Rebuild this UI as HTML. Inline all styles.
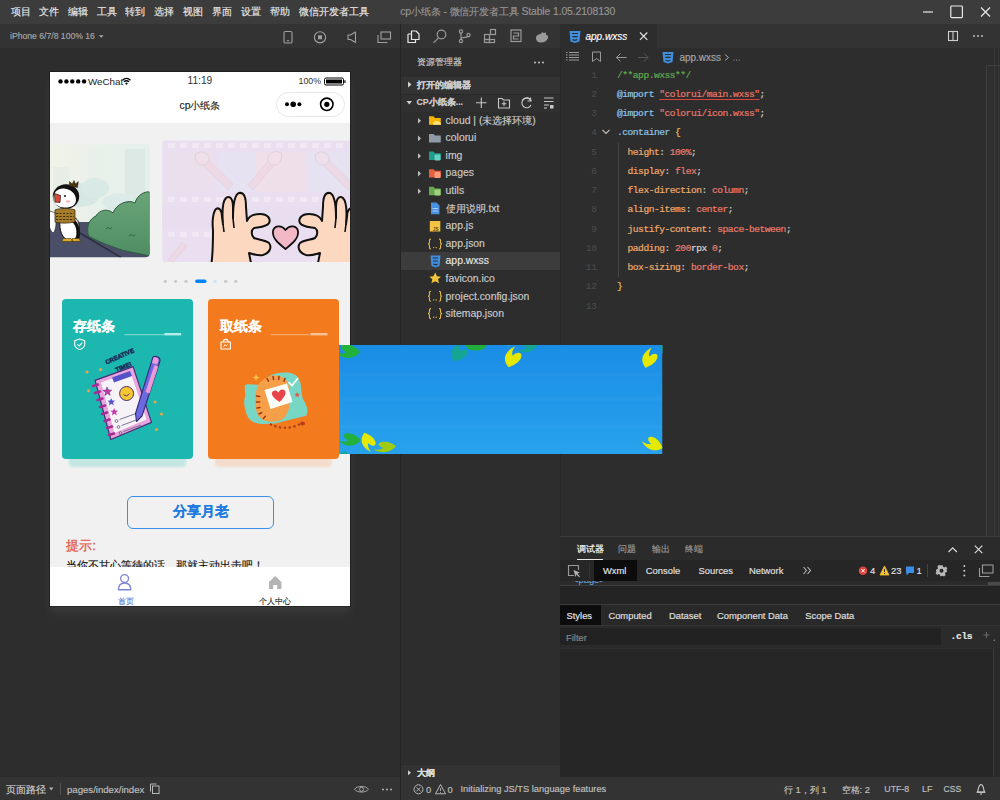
<!DOCTYPE html>
<html><head><meta charset="utf-8">
<style>
*{box-sizing:border-box;margin:0;padding:0}
html,body{width:1000px;height:800px;overflow:hidden;background:#2d2d2d;font-family:"Liberation Sans",sans-serif;color:#ccc}
.a{position:absolute}
svg{position:absolute;overflow:visible}
.t{position:absolute;white-space:nowrap;line-height:1;-webkit-text-stroke:.15px currentColor}
</style></head><body>

<!-- title bar -->
<div class="a" style="left:0;top:0;width:1000px;height:24px;background:#3c3c3c"></div>
<div class="t" style="left:10.5px;top:6.5px;font-size:10.4px;color:#e8e8e8">项目</div><div class="t" style="left:39px;top:6.5px;font-size:10.4px;color:#e8e8e8">文件</div><div class="t" style="left:67.7px;top:6.5px;font-size:10.4px;color:#e8e8e8">编辑</div><div class="t" style="left:96.9px;top:6.5px;font-size:10.4px;color:#e8e8e8">工具</div><div class="t" style="left:125.4px;top:6.5px;font-size:10.4px;color:#e8e8e8">转到</div><div class="t" style="left:154px;top:6.5px;font-size:10.4px;color:#e8e8e8">选择</div><div class="t" style="left:183px;top:6.5px;font-size:10.4px;color:#e8e8e8">视图</div><div class="t" style="left:212px;top:6.5px;font-size:10.4px;color:#e8e8e8">界面</div><div class="t" style="left:241px;top:6.5px;font-size:10.4px;color:#e8e8e8">设置</div><div class="t" style="left:270px;top:6.5px;font-size:10.4px;color:#e8e8e8">帮助</div><div class="t" style="left:299px;top:6.5px;font-size:10.4px;color:#e8e8e8">微信开发者工具</div>
<div class="t" style="left:400.3px;top:6.8px;font-size:10.4px;color:#959595;letter-spacing:-.12px">cp小纸条 - 微信开发者工具 Stable 1.05.2108130</div>

<!-- sim toolbar -->
<div class="a" style="left:0;top:24px;width:400px;height:24px;background:#333333"></div>
<div class="t" style="left:10px;top:32px;font-size:8.65px;color:#a8a8a8">iPhone 6/7/8 100% 16</div>

<svg style="left:0;top:0" width="1000" height="800">
  <!-- sim toolbar icons -->
  <g fill="none" stroke="#a0a0a0" stroke-width="1.1">
    <rect x="284" y="31.5" width="8" height="11.5" rx="1.3"/>
    <path d="M286.8 40.8 L289.2 40.8"/>
    <circle cx="320" cy="37.3" r="5.6"/>
    <path d="M348 35 L350.5 35 L355.5 32 L355.5 42.5 L350.5 39.5 L348 39.5 Z" stroke-linejoin="round"/>
    <rect x="381" y="32" width="9.5" height="7" />
    <path d="M378 35 L378 42.5 L387.5 42.5"/>
  </g>
  <rect x="318" y="35.3" width="4" height="4" fill="#a0a0a0"/>
  <path d="M99 35.3 L103.5 35.3 L101.25 37.8 Z" fill="#b0b0b0"/>
  <!-- window controls -->
  <path d="M923 12 L933 12" stroke="#e8e8e8" stroke-width="1.2"/>
  <rect x="950.8" y="6" width="11.6" height="11.6" rx=".8" fill="none" stroke="#e8e8e8" stroke-width="1.2"/>
  <path d="M981 7.5 L990 16.5 M990 7.5 L981 16.5" stroke="#e8e8e8" stroke-width="1.2"/>
</svg>
<!-- simulator area -->
<div class="a" style="left:0;top:48px;width:400px;height:729px;background:#2d2d2d"></div>
<div class="a" style="left:400px;top:24px;width:1px;height:753px;background:#242424"></div>

<!-- phone -->
<div class="a" style="left:50px;top:72px;width:300px;height:534px;box-shadow:0 0 0 1px rgba(0,0,0,.35),0 7px 9px rgba(255,255,255,.07)"></div>
<div id="phone" class="a" style="left:50px;top:72px;width:300px;height:533.6px;background:#f1f1f1;overflow:hidden">
  <!-- status + nav -->
  <div class="a" style="left:0;top:0;width:300px;height:51px;background:#fff"></div>
  <svg style="left:0;top:0" width="300" height="20">
    <circle cx="10.5" cy="9.4" r="2.2" fill="#000"/><circle cx="16.4" cy="9.4" r="2.2" fill="#000"/><circle cx="22.3" cy="9.4" r="2.2" fill="#000"/><circle cx="28.2" cy="9.4" r="2.2" fill="#000"/><circle cx="34.1" cy="9.4" r="2.2" fill="#000"/>
    <path d="M72.5 8.2 Q76.5 4.6 80.5 8.2" stroke="#000" stroke-width="1.3" fill="none"/>
    <path d="M74 9.8 Q76.5 7.6 79 9.8" stroke="#000" stroke-width="1.3" fill="none"/>
    <circle cx="76.5" cy="11.6" r="1.1" fill="#000"/>
    <rect x="274.5" y="6" width="19" height="7" rx="1.5" fill="none" stroke="#000" stroke-width="1"/>
    <rect x="276" y="7.5" width="16" height="4" fill="#000"/>
    <rect x="294.3" y="8.3" width="1.2" height="2.6" fill="#000"/>
  </svg>
  <div class="t" style="left:38px;top:4.5px;font-size:9.8px;color:#222;-webkit-text-stroke:0">WeChat</div>
  <div class="t" style="left:137.5px;top:3.5px;font-size:10.2px;color:#333;-webkit-text-stroke:0">11:19</div>
  <div class="t" style="left:248.5px;top:5px;font-size:8.8px;color:#333;-webkit-text-stroke:0">100%</div>
  <div class="t" style="left:129.5px;top:28.5px;font-size:10.4px;color:#222">cp小纸条</div>
  <!-- capsule -->
  <div class="a" style="left:225.5px;top:19.8px;width:69.6px;height:25px;border:1px solid #e6e6e6;border-radius:13px;background:rgba(255,255,255,.6)"></div>
  <svg style="left:0;top:0" width="300" height="60">
    <circle cx="237" cy="32.3" r="2" fill="#000"/><circle cx="243.2" cy="32.3" r="2.8" fill="#000"/><circle cx="249.4" cy="32.3" r="2" fill="#000"/>
    <circle cx="276.8" cy="32.3" r="6.2" fill="none" stroke="#000" stroke-width="1.6"/>
    <circle cx="276.8" cy="32.3" r="2.6" fill="#000"/>
  </svg>

  <!-- swiper -->
  <svg style="left:0;top:0" width="300" height="534">
    <defs>
      <clipPath id="cl1"><rect x="-10" y="71.4" width="109.5" height="113.9" rx="4"/></clipPath>
      <clipPath id="cl2"><rect x="112.2" y="68.3" width="250" height="121.7" rx="4"/></clipPath>
      <linearGradient id="g1" x1="0" y1="0" x2="1" y2="0"><stop offset="0" stop-color="#f1f3e8"/><stop offset="1" stop-color="#e4efec"/></linearGradient>
      <linearGradient id="gbush" x1="0" y1="0" x2="0" y2="1"><stop offset="0" stop-color="#6aa579"/><stop offset="1" stop-color="#4f8d62"/></linearGradient>
    </defs>
    <g clip-path="url(#cl1)">
      <rect x="-10" y="71.4" width="110" height="114" fill="url(#g1)"/>
      <rect x="3" y="95" width="16" height="45" fill="#e6eee6"/>
      <rect x="38" y="76" width="18" height="70" fill="#e8f0ea"/>
      <rect x="75" y="77" width="20" height="60" fill="#dde9e4"/>
      <ellipse cx="30" cy="123" rx="20" ry="12" fill="#d6e7e4"/>
      <ellipse cx="45" cy="116" rx="14" ry="10" fill="#d9e9e6"/>
      <ellipse cx="70" cy="130" rx="18" ry="9" fill="#dcebe8"/>
      <path d="M-10 150 L40 150 L99.5 172 L99.5 186 L-10 186 Z" fill="#4a4f67"/>
      <path d="M29 160.5 L71 185.5" stroke="#2c2f42" stroke-width="1.6"/>
      <path d="M38.5 164 C36 155 39 147 46 144 C49 138 58 136 63 141 C66 132 78 127 85 131 C87 123 95 119 99.5 120 L99.5 184 C88 181 76 180 66 176 C55 172 45 168 38.5 164 Z" fill="url(#gbush)" stroke="#2f5b40" stroke-width="1"/>
      <path d="M56 157 l2 -1.5 l2 1.5 l2 -1.5 M79 164 l2 -1.5 l2 1.5 l2 -1.5" stroke="#2f5b40" stroke-width=".8" fill="none"/>
      <!-- penguin -->
      <path d="M0 139 C-3 148 -1 158 3 161 C6 159 7 149 5 141 Z" fill="#fff" stroke="#222" stroke-width=".6"/>
      <path d="M10 149 C9 158 12 167 19 168.5 C27 169 30 161 29 152 C28 147 25 145 20 145 C14 145 11 146 10 149 Z" fill="#fff" stroke="#111" stroke-width="1"/>
      <path d="M23.5 147 C29 150 31 159 29.5 166 L25.5 167.5 C27.5 160 26.5 153 21.5 149.5 Z" fill="#111"/>
      <ellipse cx="16" cy="124.5" rx="13.2" ry="12.3" fill="#111"/>
      <path d="M3.5 127.5 C3 120 8 116 14 116.5 C21 117 26 122 26 128 C26 133.5 20.5 136 14 135.5 C8 135 4 132 3.5 127.5 Z" fill="#fff"/>
      <path d="M4.5 121.5 L10.5 123.5 L10 130.5 L5 130 Z" fill="#e0493a" stroke="#111" stroke-width=".7"/>
      <circle cx="15" cy="124" r="1" fill="#111"/>
      <ellipse cx="18" cy="129.5" rx="2" ry="1.2" fill="#f3b6b0"/>
      <path d="M19.5 114 L19.5 109.5 L22.2 112 L24 108.5 L25.5 112 L28.3 109.5 L27.5 115.5 Z" fill="#4a3510" stroke="#2a1a00" stroke-width=".5"/>
      <path d="M5 138 C9 136 20 136 25 138 L25 150 C18 151.5 10 151.5 5 150 Z" fill="#a57c2c" stroke="#2a1f08" stroke-width=".7"/>
      <path d="M6 141.5 L24 141.5 M6 144.5 L24 144.5 M6 147.5 L24 147.5" stroke="#3a2a08" stroke-width=".9" stroke-dasharray="2.2 1.3"/>
      <path d="M13 166.5 L21 166.5 L23 169.5 L12 169.5 Z M22 166.5 L29 166.5 L30.5 169.3 L22 169.5 Z" fill="#d9a930" stroke="#3a2a00" stroke-width=".5"/>
    </g>
    <g clip-path="url(#cl2)">
      <rect x="112.2" y="68.3" width="200" height="122" fill="#eadff0"/>
      <rect x="118" y="80" width="46" height="40" fill="#ecdfec"/>
      <rect x="168" y="80" width="50" height="40" fill="#e6e2f1"/>
      <rect x="206" y="80" width="50" height="40" fill="#eedfe9"/>
      <rect x="258" y="80" width="46" height="40" fill="#e6e2f1"/>
      <rect x="112" y="134" width="200" height="22" fill="#e9ddf0"/>
      <g fill="#f0e8f4">
        <rect x="118" y="71" width="7" height="5"/><rect x="130" y="71" width="7" height="5"/><rect x="142" y="71" width="7" height="5"/><rect x="154" y="71" width="7" height="5"/><rect x="166" y="71" width="7" height="5"/><rect x="178" y="71" width="7" height="5"/><rect x="190" y="71" width="7" height="5"/><rect x="202" y="71" width="7" height="5"/><rect x="214" y="71" width="7" height="5"/><rect x="226" y="71" width="7" height="5"/><rect x="238" y="71" width="7" height="5"/><rect x="250" y="71" width="7" height="5"/><rect x="262" y="71" width="7" height="5"/><rect x="274" y="71" width="7" height="5"/><rect x="286" y="71" width="7" height="5"/>
        <rect x="118" y="125" width="7" height="5"/><rect x="130" y="125" width="7" height="5"/><rect x="142" y="125" width="7" height="5"/><rect x="154" y="125" width="7" height="5"/><rect x="166" y="125" width="7" height="5"/><rect x="178" y="125" width="7" height="5"/><rect x="190" y="125" width="7" height="5"/><rect x="202" y="125" width="7" height="5"/><rect x="214" y="125" width="7" height="5"/><rect x="226" y="125" width="7" height="5"/><rect x="238" y="125" width="7" height="5"/><rect x="250" y="125" width="7" height="5"/><rect x="262" y="125" width="7" height="5"/><rect x="274" y="125" width="7" height="5"/><rect x="286" y="125" width="7" height="5"/>
        <rect x="118" y="160" width="7" height="5"/><rect x="130" y="160" width="7" height="5"/><rect x="142" y="160" width="7" height="5"/><rect x="154" y="160" width="7" height="5"/>
      </g>
      <g opacity=".5">
        <path d="M178 118 L152 92 L157 86 L183 112 Z" fill="#f0d2dc" stroke="#d8c0cc" stroke-width=".7"/>
        <path d="M146 82 C150 78 157 80 159 85 C160 90 156 94 151 93 C147 92 144 87 146 82 Z" fill="#f3dde4" stroke="#cdbac6" stroke-width=".8"/>
        <path d="M203 118 L225 92 L220 87 L198 113 Z" fill="#f0d2dc" stroke="#d8c0cc" stroke-width=".7"/>
        <path d="M231 81 C227 78 220 80 218 85 C217 90 221 94 226 93 C230 92 233 86 231 81 Z" fill="#f3dde4" stroke="#cdbac6" stroke-width=".8"/>
        <path d="M298 118 L272 92 L277 86 L303 112 Z" fill="#f0d2dc" stroke="#d8c0cc" stroke-width=".7"/>
        <path d="M266 82 C270 78 277 80 279 85 C280 90 276 94 271 93 C267 92 264 87 266 82 Z" fill="#f3dde4" stroke="#cdbac6" stroke-width=".8"/>
        <path d="M118 188 L132 170 L137 174 L123 190 Z" fill="#f0d2dc" stroke="#d8c0cc" stroke-width=".7"/>
      </g>
      <!-- left hand -->
      <path d="M161.5 191 C163 180 163 168 163 158 C162 150 163 140 166 137 C169 135 172 138 172 145 L173 152 C172 140 172 130 176 126 C180 123 183 127 183 135 L183 146 C183 133 184 123 189 121 C194 120 196 125 196 135 L197 149 C199 144 204 142 210 142 C218 142 221 147 219 151 C217 155 210 155 204 156 C201 158 201 163 204 166 C208 168 215 168 219 171 C222 175 220 181 213 183 C207 184 203 182 199 181 L201 191 Z" fill="#fbd8bf" stroke="#111" stroke-width="2" stroke-linejoin="round"/>
      <path d="M173 152 L174 160 M183 146 L184 156" stroke="#111" stroke-width="1.6" fill="none"/>
      <!-- heart -->
      <path d="M235.5 177 C228 171 222 166 223 159 C224 154 231 152 235.5 158 C240 152 247 154 248 159 C249 166 243 171 235.5 177 Z" fill="#f2b8c6" stroke="#111" stroke-width="1.8" stroke-linejoin="round"/>
      <!-- right hand -->
      <path d="M310 191 C306 180 306 168 306 158 C307 150 306 140 303 137 C300 135 297 138 297 145 L296 152 C297 140 297 130 293 126 C289 123 286 127 286 135 L286 146 C286 133 285 123 280 121 C275 120 273 125 273 135 L272 149 C270 144 265 142 259 142 C251 142 248 147 250 151 C252 155 259 155 265 156 C268 158 268 163 265 166 C261 168 254 168 250 171 C247 175 249 181 256 183 C262 184 266 182 270 181 L268 191 Z" fill="#fbd8bf" stroke="#111" stroke-width="2" stroke-linejoin="round"/>
      <path d="M296 152 L295 160 M286 146 L285 156" stroke="#111" stroke-width="1.6" fill="none"/>
    </g>
    <!-- dots -->
    <g fill="#c8c8c8">
      <circle cx="115.3" cy="209.3" r="1.6"/><circle cx="125.6" cy="209.3" r="1.6"/><circle cx="136" cy="209.3" r="1.6"/>
      <circle cx="165" cy="209.3" r="1.6" fill="#cfe0ee"/><circle cx="175.7" cy="209.3" r="1.6"/><circle cx="185.8" cy="209.3" r="1.6"/>
    </g>
    <rect x="145.2" y="207.6" width="11.3" height="3.4" rx="1.7" fill="#0081ff"/>
  </svg>

  <!-- cards -->
  <div class="a" style="left:18.5px;top:236px;width:117px;height:158.8px;background:#c3e6e3;filter:blur(.8px);border-radius:4px"></div>
  <div class="a" style="left:11.6px;top:227.2px;width:131.7px;height:159.5px;background:#1cb8b0;border-radius:4px"></div>
  <div class="a" style="left:165px;top:236px;width:117px;height:158.8px;background:#f3dccb;filter:blur(.8px);border-radius:4px"></div>
  <div class="a" style="left:158.4px;top:227.2px;width:130.3px;height:159.5px;background:#f37b1d;border-radius:4px"></div>
  <div class="t" style="left:23.3px;top:247.5px;font-size:13.8px;font-weight:700;color:#fff">存纸条</div>
  <div class="t" style="left:169.7px;top:247.5px;font-size:13.8px;font-weight:700;color:#fff">取纸条</div>
  <svg style="left:0;top:0" width="300" height="534">
    <rect x="74.4" y="262.2" width="40" height="1" fill="#8ad9d3"/>
    <rect x="114.3" y="261" width="16.8" height="2.4" fill="#b3ece8"/>
    <rect x="220.8" y="262.2" width="38.5" height="1" fill="#f7b27c"/>
    <rect x="260.3" y="261" width="17.2" height="2.4" fill="#f9c39a"/>
    <!-- shield -->
    <path d="M29.7 267 L34.7 268.8 L34.7 272.5 C34.7 275 32.5 276.6 29.7 277.5 C26.9 276.6 24.7 275 24.7 272.5 L24.7 268.8 Z" fill="none" stroke="#fff" stroke-width="1.1" stroke-linejoin="round"/>
    <path d="M27.3 272.3 L29.2 274 L32.3 270.6" fill="none" stroke="#fff" stroke-width="1.1"/>
    <!-- bag -->
    <path d="M171 270 L180.4 270 L180.4 277 L171 277 Z" fill="none" stroke="#fff" stroke-width="1.1" stroke-linejoin="round"/>
    <path d="M173.3 270 C173.3 266.5 178.1 266.5 178.1 270" fill="none" stroke="#fff" stroke-width="1.1"/>
    <path d="M173.5 275 L175 272.5 L176.3 274 L177.8 272.2" fill="none" stroke="#fff" stroke-width=".8"/>
    <!-- notebook illustration -->
    <g fill="#e3a54a"><circle cx="37" cy="300" r="1.6"/><circle cx="50.6" cy="297.6" r="1.6"/><circle cx="38.5" cy="318.8" r="1.6"/><circle cx="105" cy="330" r="1.6"/><circle cx="111.5" cy="342" r="1.6"/><circle cx="106.5" cy="357.5" r="1.6"/></g>
    <text x="0" y="0" font-family="Liberation Sans" font-weight="700" font-size="6.2" fill="#1d2a5a" stroke="#1d2a5a" stroke-width=".45" transform="translate(56.5,292.5) rotate(-24)">CREATIVE</text>
    <text x="0" y="0" font-family="Liberation Sans" font-weight="700" font-size="6.2" fill="#1d2a5a" stroke="#1d2a5a" stroke-width=".45" transform="translate(66.5,300) rotate(-22)">TIME!</text>
    <path d="M45.1 308.4 L83.1 294.6 L101.5 350.4 L60.8 367.5 Z" fill="#e9a6dc" stroke="#4b2a78" stroke-width="1.2" stroke-linejoin="round"/>
    <path d="M51 310.5 L80.5 300 L96.5 347.5 L64.5 361 Z" fill="#f6f3f8"/>
    <path d="M62 305.5 L80 299 L82 304 L64 310.5 Z" fill="#5551c9"/>
    <circle cx="76.6" cy="321.5" r="7" fill="#f5c832" stroke="#4b2a78" stroke-width="1"/>
    <path d="M73.5 322.5 Q76.5 325.5 79.5 321.5" stroke="#4b2a78" stroke-width=".9" fill="none"/>
    <path d="M57 315 l1.5 3 l3.2 .2 l-2.4 2 l.9 3.1 l-2.7 -1.7 l-2.7 1.9 l.7 -3.2 l-2.6 -2 l3.3 -.3 Z" fill="#c43aa8" stroke="#4b2a78" stroke-width=".5"/>
    <path d="M61 326 l1.3 2.6 l2.8 .2 l-2.1 1.8 l.8 2.7 l-2.4 -1.5 l-2.4 1.6 l.6 -2.8 l-2.2 -1.8 l2.9 -.2 Z" fill="#5551c9"/>
    <path d="M64 336 l1.3 2.6 l2.8 .2 l-2.1 1.8 l.8 2.7 l-2.4 -1.5 l-2.4 1.6 l.6 -2.8 l-2.2 -1.8 l2.9 -.2 Z" fill="#c43aa8"/>
    <g fill="none" stroke="#6a6a88" stroke-width=".9"><circle cx="66.5" cy="349" r="1.4"/><circle cx="68.5" cy="355" r="1.4"/><circle cx="70.5" cy="361" r="1.4"/>
    <path d="M69.5 347.5 L86 341.5 M71.5 353.5 L89 347 M73.5 359.5 L91 353"/></g>
    <g stroke="#a52c95" stroke-width="2.6" stroke-linecap="round"><path d="M43 314 l5 -1.5 M45 321 l5 -1.5 M47.5 328 l5 -1.5 M50 335 l5 -1.5 M52 342 l5 -1.5 M54.5 349 l5 -1.5 M57 356 l5 -1.5 M59 363 l5 -1.5"/></g>
    <path d="M103 285 C106 283.5 110.5 285 110 289 L92 344 L86.5 349.5 L85.5 341.5 Z" fill="#6c6ae0" stroke="#3b2a78" stroke-width="1.1" stroke-linejoin="round"/>
    <path d="M104.5 293 L95.5 320 L99.5 321.5 L108.2 294.5 Z" fill="#ee9ad8"/>
    <path d="M103.5 285.5 C106 284.5 109 286 108.5 288.5 L107 292.5 L102 291 Z" fill="#ee9ad8"/>
    
    <!-- tiger illustration -->
    <path d="M194.8 313.2 C194.5 318 195.5 322 195.3 324 C194 328 194 330 194.4 333.3 C195 338 196 341 197.2 343.7 C199 347 201 349 203.8 350.2 C207 351.5 210 352 213.1 352.1 L224.4 351.6 C228 351 231 350 233.8 349.3 L256.3 343.7 C257.5 341 257.5 338.5 257.2 336.2 C256 332 254 329 252.5 325.8 C251.5 321 251 316 250.7 311.8 C249.5 308 248 305 246 303.3 C243 301.5 240 300.7 237.5 300.5 C232 300.5 228 301 224.4 301.9 C221 303 219.5 304 217.8 305.2 C214 308 211 311 208.5 312.7 C205 312.5 202 312.3 199 312.2 C197 312.2 195.5 312.5 194.8 313.2 Z" fill="#78d6c5"/>
    <path d="M206 320 C208 309 216 303.5 226 303.5 C234 303.5 239 309 239.5 318 C241 328 240 340 234 346 C228 351 216 351 210 346 C205 341 204.5 330 206 320 Z" fill="#f5a049"/>
    <g stroke="#9e3512" stroke-width="1.5" stroke-linecap="round" fill="none"><path d="M206.5 324 l3.2 .6 M206.5 330 l3.2 0 M207 336 l3 -.6 M209 342 l2.7 -1.4 M213.5 346.5 l1.8 -2.2 M217 306.5 l1.5 2.6 M223 304.5 l.6 3 M229 304.5 l-.3 3 M235 306.5 l-1 2.7"/></g>
    <path d="M214.5 318 L237 311.5 L242.5 330 L220.5 337 Z" fill="#fffdf8"/>
    <path d="M229.5 330 C225 327 221 323.5 222 320.5 C223 318 226.5 317.5 228.5 320.5 C230 317 233.5 316.5 235.2 319 C236.5 322 233.5 326.5 229.5 330 Z" fill="#e8454a"/>
    <path d="M238.5 310 L242 313.5 L248 306" stroke="#fff" stroke-width="1.6" fill="none"/>
    <path d="M247 320 l.9 1.8 l2 .1 l-1.5 1.3 l.6 2 l-1.8 -1.1 l-1.8 1.1 l.6 -2 l-1.5 -1.3 l2 -.1 Z" fill="#e8504a"/>
    <path d="M220 352 C228 357 242 357 250 352" stroke="#a83a14" stroke-width="2.2" stroke-dasharray="2.2 2.6" fill="none"/>
    <ellipse cx="252.5" cy="351.5" rx="2.5" ry="2" fill="#c03a20"/>
    <path d="M206 302 l1 2.5 l2.5 1 l-2.5 1 l-1 2.5 l-1 -2.5 l-2.5 -1 l2.5 -1 Z" fill="#f9c44a"/>
  </svg>
  <!-- button -->
  <div class="a" style="left:77.4px;top:423.5px;width:147px;height:33px;border:1.2px solid #3a8fe8;border-radius:6px"></div>
  <div class="t" style="left:123px;top:433px;font-size:13.5px;font-weight:700;color:#1f7be0">分享月老</div>
  <div class="t" style="left:16.3px;top:467px;font-size:13px;color:#e5604c;-webkit-text-stroke:.35px currentColor">提示:</div>
  <div class="t" style="left:16.3px;top:488px;font-size:10.7px;color:#111">当你不甘心等待的话，那就主动出击吧！</div>
  <!-- tabbar -->
  <div class="a" style="left:0;top:495px;width:300px;height:40px;background:#fff"></div>
  <svg style="left:0;top:0" width="300" height="534">
    <circle cx="74.6" cy="506.5" r="3.9" fill="none" stroke="#7d84d6" stroke-width="1.4"/>
    <path d="M68.4 517.8 C68.4 512.6 71 511 74.6 511 C78.2 511 80.8 512.6 80.8 517.8 Z" fill="none" stroke="#7d84d6" stroke-width="1.4" stroke-linejoin="round"/>
    <path d="M219 510 L225.2 504 L231.4 510 L231.4 517 L227.2 517 L227.2 513 L223.2 513 L223.2 517 L219 517 Z" fill="#b4b4b4"/>
  </svg>
  <div class="t" style="left:67.5px;top:526px;font-size:8px;color:#5f82d8">首页</div>
  <div class="t" style="left:209.4px;top:526px;font-size:8px;color:#333">个人中心</div>
</div>




<!-- explorer -->
<div class="a" style="left:401px;top:24px;width:159px;height:24px;background:#333333"></div>
<div class="a" style="left:401px;top:48px;width:159px;height:729px;background:#2d2d2d"></div>
<div class="a" style="left:401px;top:76.5px;width:159px;height:17.5px;background:#333333"></div><div class="a" style="left:401px;top:94px;width:159px;height:1px;background:#2a2a2a"></div><div class="a" style="left:401px;top:95px;width:159px;height:16.5px;background:#303030"></div>
<div class="a" style="left:401px;top:252px;width:159px;height:17.8px;background:#3c3c3c"></div>
<div class="a" style="left:401px;top:764px;width:159px;height:13px;background:#333333;border-top:1px solid #2a2a2a"></div>
<svg style="left:0;top:0" width="1000" height="800">
  <!-- activity icons -->
  <g fill="none" stroke="#e8e8e8" stroke-width="1.2" stroke-linejoin="round">
    <path d="M411.5 31 L416 31 L419 34 L419 39.5 L411.5 39.5 Z"/>
    <path d="M408 34 L411.5 34 M408 34 L408 42.5 L415.5 42.5 L415.5 39.5"/>
  </g>
  <g fill="none" stroke="#9a9a9a" stroke-width="1.2">
    <circle cx="441.5" cy="34.5" r="4.3"/><path d="M438.5 37.8 L433.5 42.8"/>
    <circle cx="461" cy="31.5" r="1.6"/><circle cx="461" cy="41" r="1.6"/><circle cx="468.5" cy="35" r="1.6"/>
    <path d="M461 33 L461 39.5 M461 38 C465 37 468 37 468.5 36.6"/>
    <rect x="484.5" y="34.5" width="5" height="5"/><rect x="484.5" y="39.5" width="5" height="3"/><rect x="489.5" y="39.5" width="5" height="3"/><rect x="490.5" y="29.5" width="5" height="5"/>
    <rect x="511" y="30" width="10" height="11.5"/><path d="M513.5 33 L518.5 33 L518.5 36 L513.5 36 L513.5 39 L518.5 39"/>
  </g>
  <path d="M536 38 C536 35 539 34 541 34 L542 32 L543.5 33 L546 32.5 L546 35 C548 35 548.5 36 548 38 C547 41 544 42.5 541 42.5 C538 42.5 536 41 536 38 Z" fill="#9a9a9a"/>
  <!-- header dots -->
  <g fill="#d0d0d0"><circle cx="535" cy="62.5" r=".9"/><circle cx="539" cy="62.5" r=".9"/><circle cx="543" cy="62.5" r=".9"/></g>
  <!-- section arrows -->
  <path d="M408 81.5 L411.5 84.5 L408 87.5 Z" fill="#d0d0d0"/>
  <path d="M406.5 101 L412 101 L409.25 104.5 Z" fill="#d0d0d0"/>
  <g fill="none" stroke="#c8c8c8" stroke-width="1.1">
    <path d="M481.3 97.5 L481.3 108 M476 102.8 L486.5 102.8"/>
    <path d="M498.5 98.5 L502 98.5 L503.5 100 L509.5 100 L509.5 108 L498.5 108 Z M504 101.5 L504 106 M501.8 103.8 L506.3 103.8"/>
    <path d="M531 101 A4.8 4.8 0 1 0 531 105"/><path d="M522.5 100 A4.8 4.8 0 0 1 530.3 99.4" /><path d="M530.5 97.5 L531 101 L527.5 101"/>
    <path d="M544 98 L553.5 98 M544 101.5 L553.5 101.5 M544 105 L549 105 M544 108 L547 108"/>
  </g>
  <rect x="550" y="105" width="3.5" height="3.5" fill="#c8c8c8"/>
  <!-- tree arrows -->
  <g fill="#c0c0c0">
    <path d="M418 118 L421 120.8 L418 123.6 Z"/><path d="M418 135.6 L421 138.4 L418 141.2 Z"/><path d="M418 153.2 L421 156 L418 158.8 Z"/><path d="M418 170.8 L421 173.6 L418 176.4 Z"/><path d="M418 188.4 L421 191.2 L418 194 Z"/>
  </g>
  <!-- folder icons -->
  <path d="M429 116.3 L433.5 116.3 L435 118 L440.8 118 L440.8 124.8 L429 124.8 Z" fill="#f4b400"/>
  <path d="M433 124.8 C433 121.5 435.5 120.5 437.5 121.3 C439.5 121.3 441 122.5 441 124.8 Z" fill="#ffe27a"/>
  <path d="M429 134 L433.5 134 L435 135.6 L440.8 135.6 L440.8 142.5 L429 142.5 Z" fill="#8e9aa6"/>
  <path d="M429 151.6 L433.5 151.6 L435 153.2 L440.8 153.2 L440.8 160 L429 160 Z" fill="#1f9c8c"/>
  <rect x="434.5" y="154.5" width="6" height="6" rx="1" fill="#66d1c0"/>
  <path d="M429 169.2 L433.5 169.2 L435 170.8 L440.8 170.8 L440.8 177.6 L429 177.6 Z" fill="#e8613e"/>
  <rect x="434.5" y="172" width="6" height="6" rx="1" fill="#ff9a7a"/>
  <path d="M429 186.8 L433.5 186.8 L435 188.4 L440.8 188.4 L440.8 195.2 L429 195.2 Z" fill="#6aa84f"/>
  <rect x="434.5" y="189.5" width="6" height="6" rx="1" fill="#9fd27f"/>
  <!-- txt icon -->
  <path d="M431 202.5 L436.5 202.5 L439.5 205.5 L439.5 214.3 L431 214.3 Z" fill="#4a90e2"/>
  <path d="M432.5 208.5 L438 208.5 M432.5 211 L438 211" stroke="#cfe3fa" stroke-width=".8"/>
  <!-- js icon -->
  <rect x="429.8" y="221" width="10.5" height="10.5" fill="#f5c243"/>
  <text x="433" y="230.5" font-family="Liberation Sans" font-size="4.5" font-weight="700" fill="#5a4a10">JS</text>
  <!-- json icons -->
  <g fill="none" stroke="#e5b94a" stroke-width="1.1"><path d="M431 239 C429 239 429.5 240.5 429.5 242 C429.5 243.2 429 244 428 244 C429 244 429.5 244.8 429.5 246 C429.5 247.5 429 249 431 249" /><path d="M439 239 C441 239 440.5 240.5 440.5 242 C440.5 243.2 441 244 442 244 C441 244 440.5 244.8 440.5 246 C440.5 247.5 441 249 439 249" /><circle cx="433.7" cy="247.6" r=".7" fill="#e5b94a" stroke="none"/><circle cx="436.3" cy="247.6" r=".7" fill="#e5b94a" stroke="none"/><path d="M431 291.3 C429 291.3 429.5 292.8 429.5 294.3 C429.5 295.5 429 296.3 428 296.3 C429 296.3 429.5 297.1 429.5 298.3 C429.5 299.8 429 301.3 431 301.3" /><path d="M439 291.3 C441 291.3 440.5 292.8 440.5 294.3 C440.5 295.5 441 296.3 442 296.3 C441 296.3 440.5 297.1 440.5 298.3 C440.5 299.8 441 301.3 439 301.3" /><circle cx="433.7" cy="299.90000000000003" r=".7" fill="#e5b94a" stroke="none"/><circle cx="436.3" cy="299.90000000000003" r=".7" fill="#e5b94a" stroke="none"/><path d="M431 308.6 C429 308.6 429.5 310.1 429.5 311.6 C429.5 312.8 429 313.6 428 313.6 C429 313.6 429.5 314.40000000000003 429.5 315.6 C429.5 317.1 429 318.6 431 318.6" /><path d="M439 308.6 C441 308.6 440.5 310.1 440.5 311.6 C440.5 312.8 441 313.6 442 313.6 C441 313.6 440.5 314.40000000000003 440.5 315.6 C440.5 317.1 441 318.6 439 318.6" /><circle cx="433.7" cy="317.20000000000005" r=".7" fill="#e5b94a" stroke="none"/><circle cx="436.3" cy="317.20000000000005" r=".7" fill="#e5b94a" stroke="none"/></g>
  <!-- css icon -->
  <path d="M430.5 255.5 L440.5 255.5 L439.5 266 L435.5 267.5 L431.5 266 Z" fill="#3f8ee0"/>
  <path d="M432.8 258 L438 258 M433 261 L437.8 261 M433.3 264 L436 264.8 L437.5 264" stroke="#2d2d2d" stroke-width="1.1" fill="none"/>
  <!-- star -->
  <path d="M435.2 272.5 L437 276.3 L441 276.7 L438 279.3 L439 283.3 L435.2 281.2 L431.4 283.3 L432.4 279.3 L429.4 276.7 L433.4 276.3 Z" fill="#f3c43a"/>
  <!-- outline arrow -->
  <path d="M408 770.3 L411 772.8 L408 775.3 Z" fill="#d0d0d0"/>
</svg>
<div class="t" style="left:416.7px;top:58px;font-size:8.8px;color:#cccccc">资源管理器</div>
<div class="t" style="left:416.5px;top:80.5px;font-size:8.8px;font-weight:700;color:#cccccc">打开的编辑器</div>
<div class="t" style="left:416.5px;top:98.2px;font-size:8.8px;font-weight:700;color:#cccccc">CP小纸条...</div>
<div class="t" style="left:445.6px;top:115.5px;font-size:10.4px;color:#cccccc;line-height:1">cloud | (未选择环境)</div>
<div class="t" style="left:445.6px;top:133.1px;font-size:10.4px;color:#cccccc">colorui</div>
<div class="t" style="left:445.6px;top:150.7px;font-size:10.4px;color:#cccccc">img</div>
<div class="t" style="left:445.6px;top:168.3px;font-size:10.4px;color:#cccccc">pages</div>
<div class="t" style="left:445.6px;top:185.9px;font-size:10.4px;color:#cccccc">utils</div>
<div class="t" style="left:445.6px;top:203.5px;font-size:10.4px;color:#cccccc">使用说明.txt</div>
<div class="t" style="left:445.6px;top:221.1px;font-size:10.4px;color:#cccccc">app.js</div>
<div class="t" style="left:445.6px;top:238.7px;font-size:10.4px;color:#cccccc">app.json</div>
<div class="t" style="left:445.6px;top:256.3px;font-size:10.4px;color:#e6e6e6">app.wxss</div>
<div class="t" style="left:445.6px;top:273.9px;font-size:10.4px;color:#cccccc">favicon.ico</div>
<div class="t" style="left:445.6px;top:291.5px;font-size:10.4px;color:#cccccc">project.config.json</div>
<div class="t" style="left:445.6px;top:309.1px;font-size:10.4px;color:#cccccc">sitemap.json</div>
<div class="t" style="left:417px;top:769px;font-size:8.8px;font-weight:700;color:#dddddd">大纲</div>

<!-- editor -->
<div class="a" style="left:560px;top:24px;width:440px;height:24px;background:#333333"></div>
<div class="a" style="left:560px;top:24px;width:97px;height:24px;background:#2d2d2d"></div>
<div class="a" style="left:560px;top:48px;width:440px;height:488px;background:#2d2d2d"></div>
<div class="a" style="left:617.5px;top:143px;width:1px;height:134px;background:#454545"></div>
<div class="a" style="left:986px;top:65px;width:14px;height:471px;background:#2f2f2f;border-left:1px solid #3d3d3d;border-top:1px solid #3d3d3d"></div>
<div class="a" style="left:994px;top:48px;width:1px;height:488px;background:#383838"></div>
<div class="a" style="left:998px;top:48px;width:1px;height:488px;background:#353535"></div>
<svg style="left:0;top:0" width="1000" height="800">
  <!-- tab css icon -->
  <path d="M569.5 31 L580.5 31 L579.5 41.5 L575 43 L570.5 41.5 Z" fill="#3f8ee0"/>
  <path d="M572 33.5 L578 33.5 M572.3 36.6 L577.7 36.6 M572.6 39.6 L575 40.4 L577.2 39.6" stroke="#2d2d2d" stroke-width="1.2" fill="none"/>
  <path d="M640 32.5 L647.3 39.8 M647.3 32.5 L640 39.8" stroke="#e0e0e0" stroke-width="1.2"/>
  <!-- split / dots -->
  <rect x="948.5" y="31.5" width="9" height="9" fill="none" stroke="#cfcfcf" stroke-width="1.1"/><path d="M953 31.5 L953 40.5" stroke="#cfcfcf" stroke-width="1.1"/>
  <g fill="#cfcfcf"><circle cx="974" cy="36" r=".9"/><circle cx="978" cy="36" r=".9"/><circle cx="982" cy="36" r=".9"/></g>
  <!-- breadcrumb icons -->
  <g stroke="#9a9a9a" stroke-width="1" fill="none">
    <path d="M566 52.5 L567.5 52.5 M566 55 L567.5 55 M566 57.5 L567.5 57.5 M566 60 L567.5 60 M569 52.5 L579 52.5 M569 55 L579 55 M569 57.5 L579 57.5 M569 60 L579 60"/>
    <path d="M592.5 52 L600.5 52 L600.5 61.5 L596.5 58.5 L592.5 61.5 Z" stroke-linejoin="round"/>
    <path d="M616.5 57.5 L626.5 57.5 M620.5 53.5 L616.5 57.5 L620.5 61.5"/>
  </g>
  <path d="M638 57.5 L648 57.5 M644 53.5 L648 57.5 L644 61.5" stroke="#555" stroke-width="1" fill="none"/>
  <path d="M662.5 52 L673.5 52 L672.5 62 L668 63.5 L663.5 62 Z" fill="#3f8ee0"/>
  <path d="M665 54.5 L671 54.5 M665.3 57.4 L670.7 57.4 M665.6 60.2 L668 61 L670.2 60.2" stroke="#2d2d2d" stroke-width="1.1" fill="none"/>
  <path d="M725 54.5 L728.5 57.5 L725 60.5" stroke="#aaa" stroke-width="1" fill="none"/>
  <g fill="#aaa"><circle cx="734" cy="60" r=".6"/><circle cx="736.6" cy="60" r=".6"/><circle cx="739.2" cy="60" r=".6"/></g>
  <!-- fold arrow line 4 -->
  <path d="M602.5 130 L606 133.5 L609.5 130" stroke="#bbb" stroke-width="1.1" fill="none"/>
</svg>
<div class="t" style="left:585.5px;top:31.5px;font-size:10px;font-style:italic;color:#ffffff">app.wxss</div>
<div class="t" style="left:679.4px;top:52.5px;font-size:10px;color:#a8a8a8">app.wxss</div>
<style>.code{font-family:"Liberation Mono",monospace;font-size:9.6px;letter-spacing:-0.48px;white-space:pre;color:#d4d4d4;-webkit-text-stroke:.2px currentColor}</style>
<div class="t" style="left:560px;top:70.50px;width:37px;text-align:right;font-family:'Liberation Mono',monospace;font-size:9.4px;color:#4a4a4a">1</div>
<div class="t code" style="left:617px;top:70.50px"><span style="color:#5fa84f">/**app.wxss**/</span></div>
<div class="t" style="left:560px;top:89.75px;width:37px;text-align:right;font-family:'Liberation Mono',monospace;font-size:9.4px;color:#4a4a4a">2</div>
<div class="t code" style="left:617px;top:89.75px"><span style="color:#8cc4e8">@import</span> <span style="color:#e8776a;text-decoration:underline solid #d9443c;text-decoration-thickness:1.2px;text-underline-offset:2.2px">"colorui/main.wxss"</span><span style="color:#c5cdd6">;</span></div>
<div class="t" style="left:560px;top:109.00px;width:37px;text-align:right;font-family:'Liberation Mono',monospace;font-size:9.4px;color:#4a4a4a">3</div>
<div class="t code" style="left:617px;top:109.00px"><span style="color:#8cc4e8">@import</span> <span style="color:#e8776a">"colorui/icon.wxss"</span><span style="color:#c5cdd6">;</span></div>
<div class="t" style="left:560px;top:128.25px;width:37px;text-align:right;font-family:'Liberation Mono',monospace;font-size:9.4px;color:#4a4a4a">4</div>
<div class="t code" style="left:617px;top:128.25px"><span style="color:#8cc4e8">.container</span> <span style="color:#e8c25a">{</span></div>
<div class="t" style="left:560px;top:147.50px;width:37px;text-align:right;font-family:'Liberation Mono',monospace;font-size:9.4px;color:#4a4a4a">5</div>
<div class="t code" style="left:617px;top:147.50px">  <span style="color:#eeaa6c">height</span><span style="color:#c5cdd6">:</span> <span style="color:#ec7c6c">100%</span><span style="color:#c5cdd6">;</span></div>
<div class="t" style="left:560px;top:166.75px;width:37px;text-align:right;font-family:'Liberation Mono',monospace;font-size:9.4px;color:#4a4a4a">6</div>
<div class="t code" style="left:617px;top:166.75px">  <span style="color:#eeaa6c">display</span><span style="color:#c5cdd6">:</span> <span style="color:#ec7c6c">flex</span><span style="color:#c5cdd6">;</span></div>
<div class="t" style="left:560px;top:186.00px;width:37px;text-align:right;font-family:'Liberation Mono',monospace;font-size:9.4px;color:#4a4a4a">7</div>
<div class="t code" style="left:617px;top:186.00px">  <span style="color:#eeaa6c">flex-direction</span><span style="color:#c5cdd6">:</span> <span style="color:#ec7c6c">column</span><span style="color:#c5cdd6">;</span></div>
<div class="t" style="left:560px;top:205.25px;width:37px;text-align:right;font-family:'Liberation Mono',monospace;font-size:9.4px;color:#4a4a4a">8</div>
<div class="t code" style="left:617px;top:205.25px">  <span style="color:#eeaa6c">align-items</span><span style="color:#c5cdd6">:</span> <span style="color:#ec7c6c">center</span><span style="color:#c5cdd6">;</span></div>
<div class="t" style="left:560px;top:224.50px;width:37px;text-align:right;font-family:'Liberation Mono',monospace;font-size:9.4px;color:#4a4a4a">9</div>
<div class="t code" style="left:617px;top:224.50px">  <span style="color:#eeaa6c">justify-content</span><span style="color:#c5cdd6">:</span> <span style="color:#ec7c6c">space-between</span><span style="color:#c5cdd6">;</span></div>
<div class="t" style="left:560px;top:243.75px;width:37px;text-align:right;font-family:'Liberation Mono',monospace;font-size:9.4px;color:#4a4a4a">10</div>
<div class="t code" style="left:617px;top:243.75px">  <span style="color:#eeaa6c">padding</span><span style="color:#c5cdd6">:</span> <span style="color:#ec7c6c">200</span><span style="color:#d8d8d8">rpx</span> <span style="color:#ec7c6c">0</span><span style="color:#c5cdd6">;</span></div>
<div class="t" style="left:560px;top:263.00px;width:37px;text-align:right;font-family:'Liberation Mono',monospace;font-size:9.4px;color:#4a4a4a">11</div>
<div class="t code" style="left:617px;top:263.00px">  <span style="color:#eeaa6c">box-sizing</span><span style="color:#c5cdd6">:</span> <span style="color:#ec7c6c">border-box</span><span style="color:#c5cdd6">;</span></div>
<div class="t" style="left:560px;top:282.25px;width:37px;text-align:right;font-family:'Liberation Mono',monospace;font-size:9.4px;color:#4a4a4a">12</div>
<div class="t code" style="left:617px;top:282.25px"><span style="color:#e8c25a">}</span></div>
<div class="t" style="left:560px;top:301.50px;width:37px;text-align:right;font-family:'Liberation Mono',monospace;font-size:9.4px;color:#4a4a4a">13</div>

<div class="a" style="left:560px;top:48px;width:1px;height:488px;background:#262626"></div>
<!-- debugger -->
<div class="a" style="left:560px;top:536px;width:440px;height:241px;background:#2b2b2b;border-top:1px solid #3c3c3c"></div>
<div class="t" style="left:577px;top:544.5px;font-size:8.8px;color:#ffffff">调试器</div>
<div class="t" style="left:618px;top:544.5px;font-size:8.8px;color:#9a9a9a">问题</div>
<div class="t" style="left:652.4px;top:544.5px;font-size:8.8px;color:#9a9a9a">输出</div>
<div class="t" style="left:685.4px;top:544.5px;font-size:8.8px;color:#9a9a9a">终端</div>
<div class="a" style="left:577px;top:558.5px;width:26px;height:1.5px;background:#e8e8e8"></div>
<div class="a" style="left:560px;top:560px;width:440px;height:21px;background:#262626"></div>
<div class="a" style="left:593.8px;top:560px;width:43.2px;height:21px;background:#0c0c0c"></div>
<div class="a" style="left:589px;top:562px;width:1px;height:17px;background:#333"></div>
<div class="a" style="left:927px;top:564px;width:1px;height:13px;background:#444"></div>
<div class="t" style="left:603px;top:566px;font-size:9.4px;color:#e8e8e8">Wxml</div>
<div class="t" style="left:645.8px;top:566px;font-size:9.4px;color:#e0e0e0">Console</div>
<div class="t" style="left:698.6px;top:566px;font-size:9.4px;color:#e0e0e0">Sources</div>
<div class="t" style="left:749px;top:566px;font-size:9.4px;color:#e0e0e0">Network</div>
<div class="t" style="left:870px;top:566px;font-size:9.4px;color:#e0e0e0">4</div>
<div class="t" style="left:891px;top:566px;font-size:9.4px;color:#e0e0e0">23</div>
<div class="t" style="left:916.5px;top:566px;font-size:9.4px;color:#e0e0e0">1</div>
<div class="a" style="left:560px;top:581px;width:428px;height:4.5px;background:#2b2b2b;overflow:hidden"><div class="t" style="left:13px;top:-6px;font-size:9.4px;color:#6a9fd8">&lt;page&gt;</div></div>
<div class="a" style="left:560px;top:585.2px;width:440px;height:1px;background:#3d3d3d"></div>
<div class="a" style="left:560px;top:586.2px;width:440px;height:17.8px;background:#242424"></div>
<div class="a" style="left:560px;top:604px;width:440px;height:1px;background:#3d3d3d"></div>
<div class="a" style="left:560px;top:605px;width:440px;height:20px;background:#292929"></div>
<div class="a" style="left:560px;top:605px;width:40.6px;height:20px;background:#0c0c0c"></div>
<div class="t" style="left:566.5px;top:610.5px;font-size:9.4px;color:#e8e8e8">Styles</div>
<div class="t" style="left:608.4px;top:610.5px;font-size:9.4px;color:#e0e0e0">Computed</div>
<div class="t" style="left:669px;top:610.5px;font-size:9.4px;color:#e0e0e0">Dataset</div>
<div class="t" style="left:717px;top:610.5px;font-size:9.4px;color:#e0e0e0">Component Data</div>
<div class="t" style="left:805.3px;top:610.5px;font-size:9.4px;color:#e0e0e0">Scope Data</div>
<div class="a" style="left:560px;top:625px;width:440px;height:1px;background:#333"></div>
<div class="a" style="left:560px;top:647.5px;width:440px;height:129.5px;background:#262626;border-top:1px solid #2f2f2f"></div>
<div class="a" style="left:993px;top:648px;width:7px;height:129px;background:#2a2a2a;border-left:1px solid #3a3a3a"></div>
<div class="a" style="left:560px;top:627.5px;width:380.5px;height:17px;background:#222222"></div>
<div class="t" style="left:566px;top:632.5px;font-size:9.4px;color:#8a8a8a">Filter</div>
<div class="t" style="left:950.5px;top:632px;font-size:9.6px;font-weight:700;font-family:'Liberation Mono',monospace;color:#e8e8e8;letter-spacing:-.3px">.cls</div>
<div class="a" style="left:988px;top:582px;width:12px;height:3px;background:#4a4a4a"></div>
<svg style="left:0;top:0" width="1000" height="800">
  <path d="M948.5 552 L952.7 547.8 L956.9 552" stroke="#d8d8d8" stroke-width="1.2" fill="none"/>
  <path d="M974.8 545.6 L982.3 553.1 M982.3 545.6 L974.8 553.1" stroke="#d8d8d8" stroke-width="1.2"/>
  <!-- inspector -->
  <path d="M574 575.5 L568.5 575.5 L568.5 565.5 L578.5 565.5 L578.5 570" stroke="#9a9a9a" stroke-width="1.1" fill="none"/>
  <path d="M573.5 570 L580 572.5 L577.5 573.5 L580 576.5 L579 577.3 L576.5 574.5 L575.5 577 Z" fill="#b0b0b0"/>
  <path d="M803.5 567 L806.5 570.5 L803.5 574 M807.5 567 L810.5 570.5 L807.5 574" stroke="#b8b8b8" stroke-width="1.1" fill="none"/>
  <circle cx="863" cy="570.7" r="4.3" fill="#e0443e"/>
  <path d="M861.3 569 L864.7 572.4 M864.7 569 L861.3 572.4" stroke="#fff" stroke-width="1"/>
  <path d="M884.5 566 L889 575 L880 575 Z" fill="#f2c230" stroke="#f2c230" stroke-width=".8" stroke-linejoin="round"/>
  <rect x="884" y="569" width="1" height="3" fill="#333"/><rect x="884" y="573" width="1" height="1" fill="#333"/>
  <path d="M906 566.5 L914 566.5 L914 573 L909 573 L906.5 575.5 L906.5 573 L906 573 Z" fill="#3a8ee6"/>
  <!-- gear -->
  <g transform="translate(941.5,570.7)">
    <path d="M-1.2 -5.5 L1.2 -5.5 L1.5 -3.9 L2.8 -3.3 L4.2 -4.2 L5.9 -2.5 L5 -1.1 L5.5 0.2 L5.5 1.2 L4.0 1.5 L3.4 2.8 L4.2 4.2 L2.5 5.9 L1.1 5 L-0.2 5.5 L-1.2 5.5 L-1.5 4 L-2.8 3.4 L-4.2 4.2 L-5.9 2.5 L-5 1.1 L-5.5 -0.2 L-5.5 -1.2 L-4 -1.5 L-3.4 -2.8 L-4.2 -4.2 L-2.5 -5.9 L-1.1 -5 Z" fill="#b8b8b8"/>
    <circle r="2" fill="#262626"/>
  </g>
  <g fill="#c8c8c8"><circle cx="964.3" cy="566" r="1"/><circle cx="964.3" cy="570.7" r="1"/><circle cx="964.3" cy="575.4" r="1"/></g>
  <rect x="982.5" y="565" width="10.5" height="8" fill="none" stroke="#9a9a9a" stroke-width="1.1"/>
  <path d="M979.5 568 L979.5 576.5 L989.5 576.5" stroke="#9a9a9a" stroke-width="1.1" fill="none"/>
  <path d="M983.5 635 L989.5 635 M986.5 632 L986.5 638" stroke="#6a6a6a" stroke-width="1"/>
  <path d="M993 641 L995 639 L995 641 Z" fill="#777"/>
</svg>

<!-- status bar -->
<div class="a" style="left:0;top:777px;width:1000px;height:23px;background:#333333"></div>
<div class="t" style="left:6px;top:784.5px;font-size:9.6px;color:#cccccc">页面路径</div>
<div class="t" style="left:67px;top:784.5px;font-size:9.6px;color:#c0c0c0">pages/index/index</div>
<div class="t" style="left:426px;top:784.5px;font-size:9.4px;color:#c0c0c0">0</div>
<div class="t" style="left:447.5px;top:784.5px;font-size:9.4px;color:#c0c0c0">0</div>
<div class="t" style="left:460.5px;top:784.5px;font-size:9.3px;color:#c0c0c0">Initializing JS/TS language features</div>
<div class="t" style="left:784px;top:784.5px;font-size:9.4px;color:#c0c0c0">行 1，列 1</div>
<div class="t" style="left:841.6px;top:784.5px;font-size:9.4px;color:#c0c0c0">空格: 2</div>
<div class="t" style="left:884.3px;top:784.5px;font-size:8.8px;color:#c0c0c0">UTF-8</div>
<div class="t" style="left:922px;top:784.5px;font-size:9px;color:#c0c0c0">LF</div>
<div class="t" style="left:943.6px;top:784.5px;font-size:8.6px;color:#c0c0c0">CSS</div>
<svg style="left:0;top:0" width="1000" height="800">
  <path d="M49 787.5 L53.5 787.5 L51.25 790.5 Z" fill="#b0b0b0"/>
  <rect x="60" y="783" width="1" height="12" fill="#555"/>
  <rect x="152.5" y="786" width="6.5" height="7.5" fill="none" stroke="#b8b8b8" stroke-width="1"/>
  <path d="M150.5 791.5 L150.5 784 L156.5 784" stroke="#b8b8b8" stroke-width="1" fill="none"/>
  <path d="M354.5 789.3 C357 785.5 366 785.5 368.5 789.3 C366 793 357 793 354.5 789.3 Z" stroke="#a8a8a8" stroke-width="1" fill="none"/>
  <circle cx="361.5" cy="789.3" r="2" fill="none" stroke="#a8a8a8" stroke-width="1"/>
  <g fill="#b0b0b0"><circle cx="383" cy="789.5" r="1"/><circle cx="387" cy="789.5" r="1"/><circle cx="391" cy="789.5" r="1"/></g>
  <rect x="400" y="777" width="1" height="23" fill="#242424"/>
  <circle cx="418.5" cy="789.3" r="4.5" fill="none" stroke="#b8b8b8" stroke-width="1"/>
  <path d="M416.5 787.3 L420.5 791.3 M420.5 787.3 L416.5 791.3" stroke="#b8b8b8" stroke-width="1"/>
  <path d="M440.5 784.5 L445.5 793.8 L435.5 793.8 Z" fill="none" stroke="#b8b8b8" stroke-width="1" stroke-linejoin="round"/>
  <path d="M440.5 788 L440.5 791 M440.5 792 L440.5 792.8" stroke="#b8b8b8" stroke-width=".9"/>
  <path d="M977.5 792 C978.5 790.5 978 785 981 784.5 C984 785 983.5 790.5 984.5 792 Z" fill="none" stroke="#d0d0d0" stroke-width="1.1" stroke-linejoin="round"/>
  <path d="M976.5 792.3 L985.5 792.3 M980 794 L982 794" stroke="#d0d0d0" stroke-width="1.1"/>
</svg>

<!-- floating banner -->
<svg style="left:338.6px;top:344.9px" width="323.5" height="109">
  <defs>
    <linearGradient id="gb" x1="0" y1="0" x2="0" y2="1"><stop offset="0" stop-color="#1a8de6"/><stop offset="1" stop-color="#28a2ec"/></linearGradient>
    <clipPath id="cb"><rect x="0" y="0" width="323.5" height="109"/></clipPath>
    <path id="leaf" d="M0 10 C-6 4 -5 -4 3 -10 C1 -6 1 -3 2 -1 C4 -5 9 -6 9 -2 C9 3 5 7 0 10 Z"/>
  </defs>
  <g clip-path="url(#cb)">
  <rect width="323.5" height="109" fill="url(#gb)"/>
  <rect x="0" y="28" width="323.5" height="3" fill="#fff" opacity=".025"/>
  <rect x="0" y="52" width="323.5" height="4" fill="#fff" opacity=".025"/>
  <rect x="0" y="80" width="323.5" height="3" fill="#fff" opacity=".025"/>
  <use href="#leaf" transform="translate(9,9) rotate(-100) scale(1.1,1.25)" fill="#22b13a"/>
  <use href="#leaf" transform="translate(117.5,6.5) rotate(15) scale(1.25,1)" fill="#15a595"/>
  <ellipse cx="137" cy="0" rx="10.5" ry="5.5" fill="#21ae3a"/>
  <use href="#leaf" transform="translate(168,-1.5) rotate(-80) scale(.4,.5)" fill="#c8d800"/>
  <use href="#leaf" transform="translate(171,11.5) rotate(8) scale(1.25,1.08)" fill="#e5e800"/>
  <use href="#leaf" transform="translate(190,3) rotate(-120) scale(1,1.1)" fill="#15a595"/>
  <use href="#leaf" transform="translate(308,12.5) rotate(8) scale(1.15,1.05)" fill="#e5e800"/>
  <use href="#leaf" transform="translate(305,-2) rotate(-80) scale(.4,.5)" fill="#c8d800"/>
  <use href="#leaf" transform="translate(325,5) rotate(-30) scale(.8,.9)" fill="#15a595"/>
  <use href="#leaf" transform="translate(11,97) rotate(-100) scale(1,1.1)" fill="#22b13a"/>
  <use href="#leaf" transform="translate(27,97.5) rotate(170) scale(-1.05,1)" fill="#e5e800"/>
  <use href="#leaf" transform="translate(46,104) rotate(-105) scale(.85,1.15)" fill="#9fcb12"/>
  <ellipse cx="5" cy="109" rx="3.5" ry="2.5" fill="#13a596"/>
  <use href="#leaf" transform="translate(313,101) rotate(-80) scale(1,1.1)" fill="#e5e800"/>
  </g>
</svg>
</body></html>
